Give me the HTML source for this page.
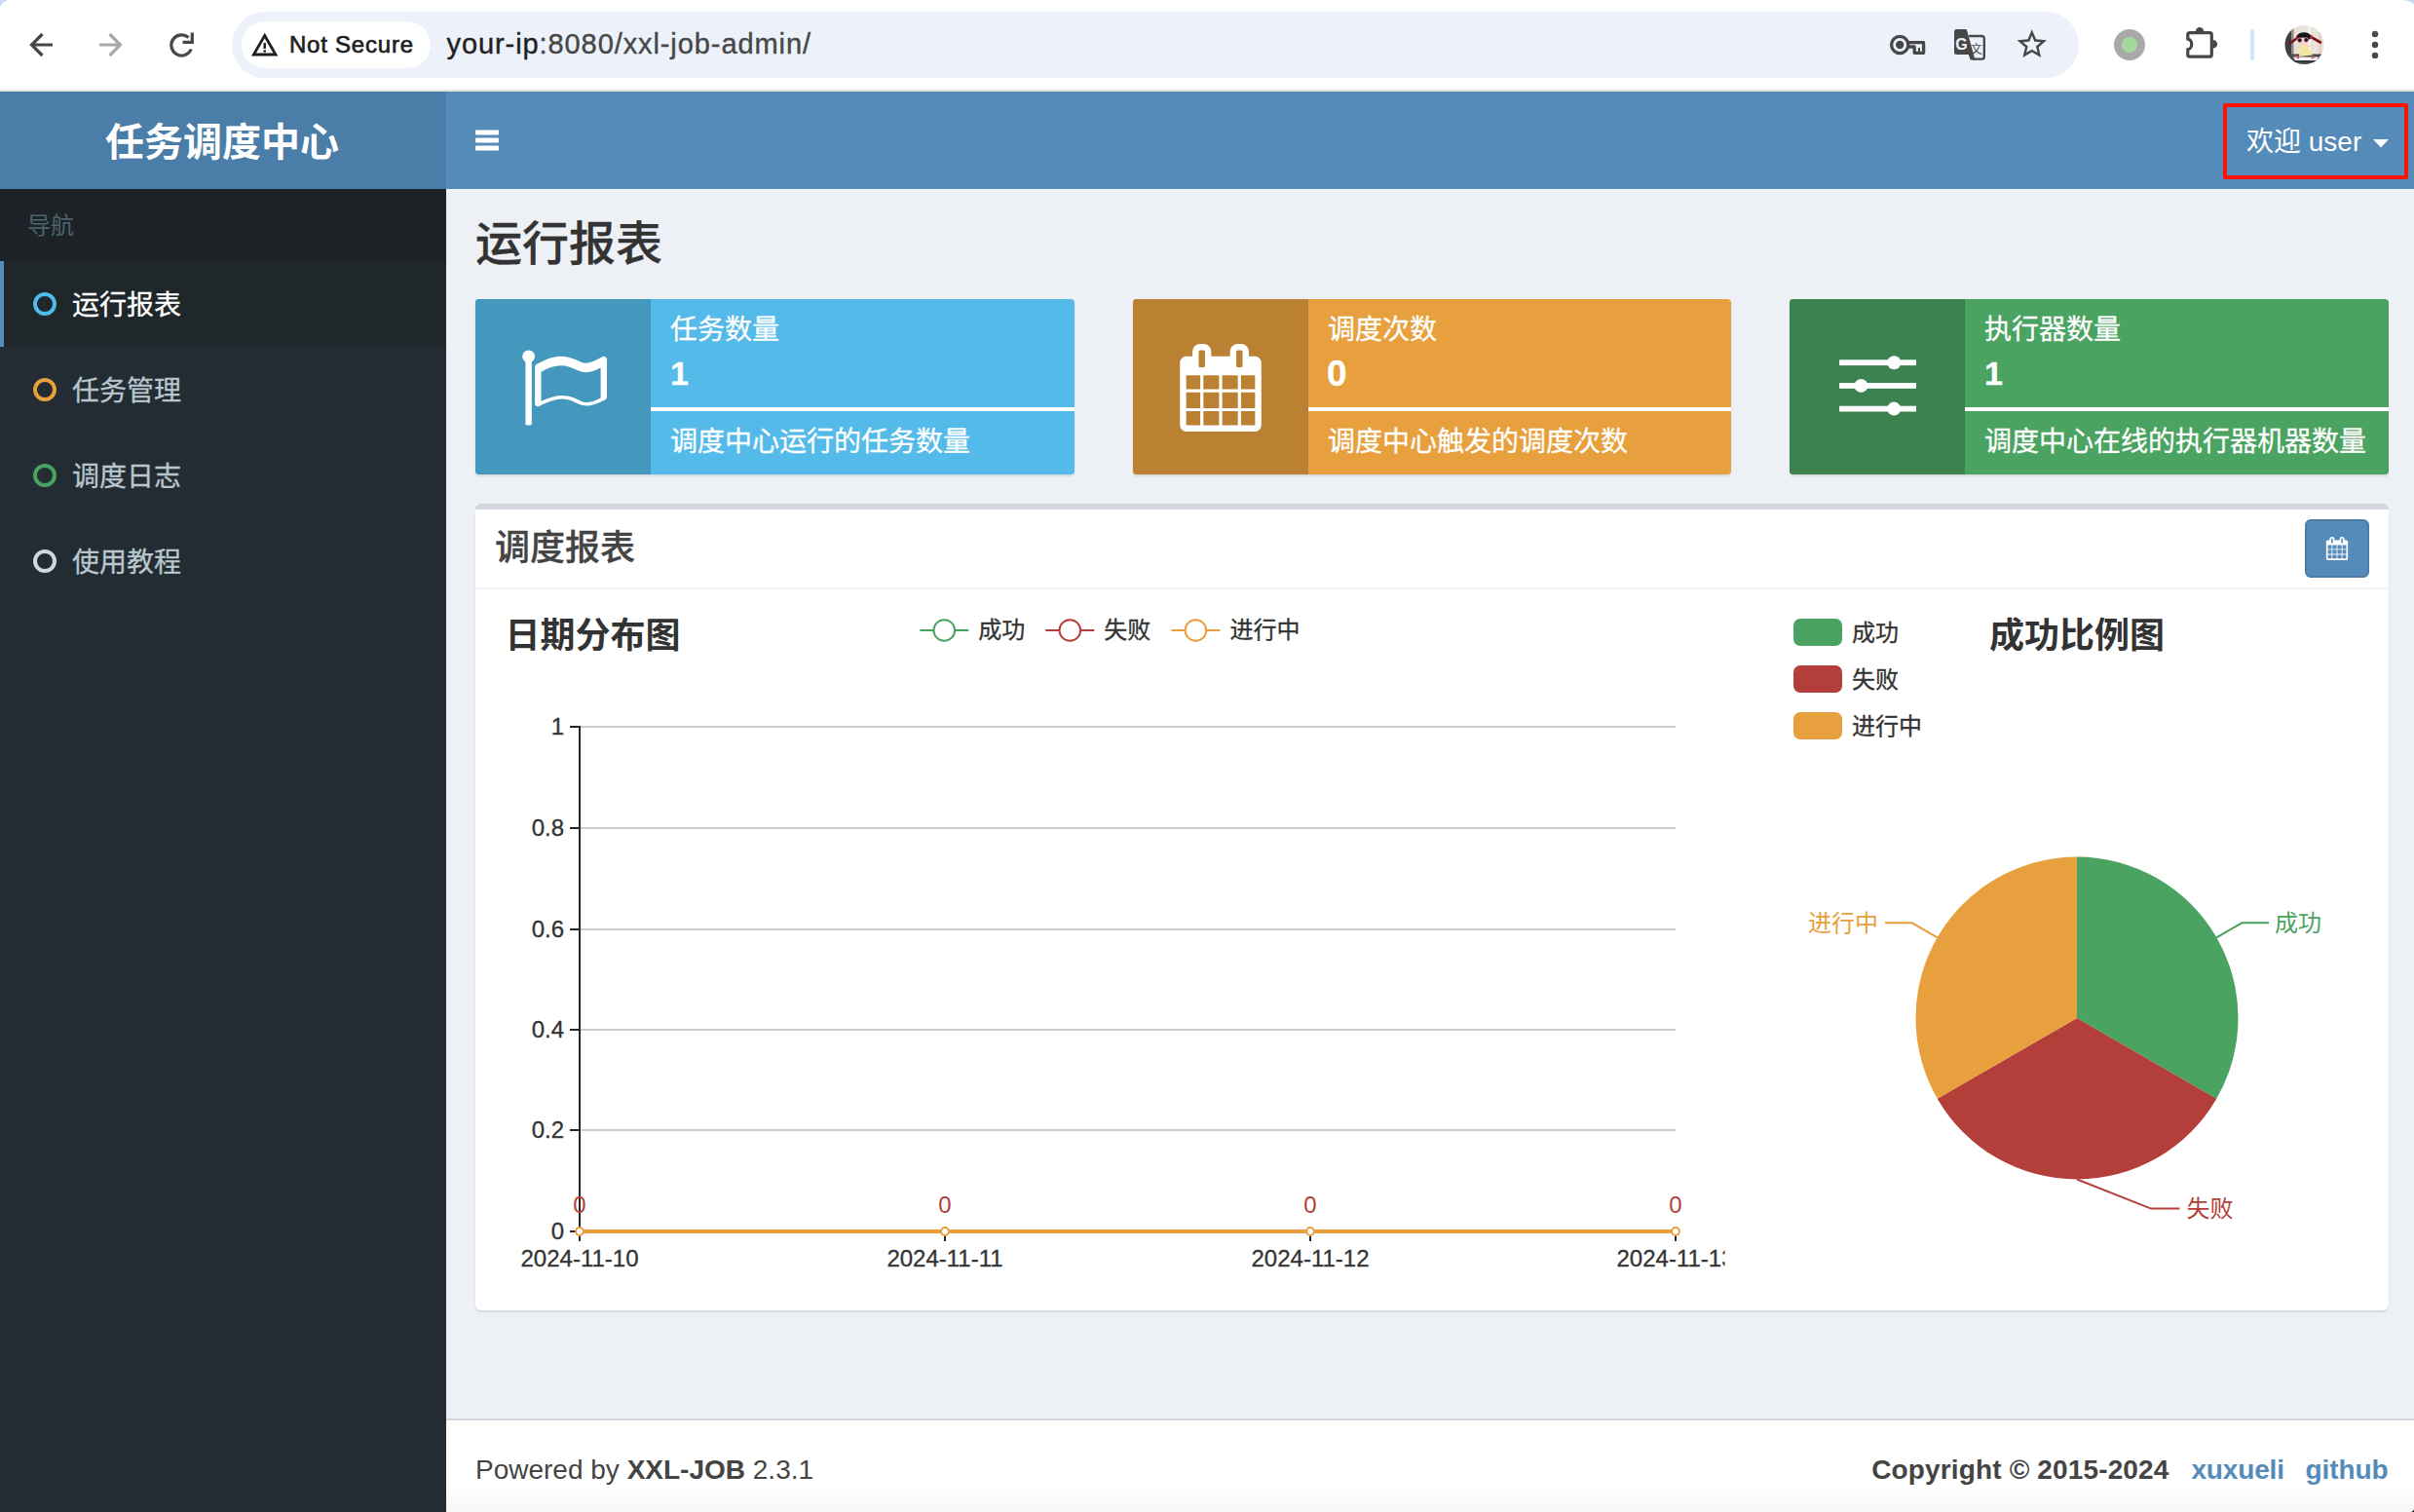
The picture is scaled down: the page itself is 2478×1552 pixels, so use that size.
<!DOCTYPE html>
<html lang="zh-CN">
<head>
<meta charset="utf-8">
<title>任务调度中心</title>
<style>
*{box-sizing:border-box;margin:0;padding:0}
html,body{width:2478px;height:1552px;overflow:hidden;background:#edf1f6}
body{position:relative;font-family:"Liberation Sans","Noto Sans CJK SC",sans-serif;color:#333}
.abs{position:absolute}
.t{position:absolute;white-space:nowrap;line-height:1}
svg{position:absolute;overflow:visible}
/* browser chrome */
#chrome{left:0;top:0;width:2478px;height:92px;background:#fff}
#chromeline{left:0;top:92px;width:2478px;height:2px;background:#e4e4e1}
#urlbar{left:238px;top:12px;width:1896px;height:68px;border-radius:34px;background:#edf2fa}
#chip{left:248px;top:22px;width:194px;height:48px;border-radius:24px;background:#fff}
/* app header */
#logo{left:0;top:94px;width:458px;height:100px;background:#4a7da7}
#navbar{left:458px;top:94px;width:2020px;height:100px;background:#548bb9}
/* sidebar */
#sidebar{left:0;top:194px;width:458px;height:1358px;background:#242c33}
#navhead{left:0;top:194px;width:458px;height:74px;background:#1d2226}
#active{left:0;top:268px;width:458px;height:88px;background:#1f272b;border-left:4px solid #548bb9}
.ring{position:absolute;width:24px;height:24px;border-radius:50%;border:4px solid #fff}
.mi{font-size:28px;color:#b8c7ce;-webkit-text-stroke:0.300px currentColor}
/* info boxes */
.ib{position:absolute;top:307px;height:180px;width:615px;border-radius:4px;box-shadow:0 2px 2px rgba(0,0,0,.1);overflow:hidden}
.ib .ic{position:absolute;left:0;top:0;width:180px;height:180px}
.ib .bar{position:absolute;left:180px;right:0;top:111px;height:4px;background:#fff}
.ib .t{color:#fff;-webkit-text-stroke:0.300px #fff}
/* box */
#box{left:488px;top:517px;width:1964px;height:828px;background:#fff;border-top:6px solid #d2d6de;border-radius:6px;box-shadow:0 2px 2px rgba(0,0,0,.1)}
#boxline{left:488px;top:603px;width:1964px;height:2px;background:#f4f4f4}
#btn{left:2366px;top:533px;width:66px;height:60px;border-radius:6px;background:#548bb9;border:2px solid #4a7da7}
/* footer */
#footer{left:458px;top:1456px;width:2020px;height:96px;background:#fff;border-top:2px solid #d2d6de}
#charts text{stroke-width:0.300px}
#charts text[fill="#333"]{stroke:#333}
#charts #lt,#charts #pt{stroke:none}
</style>
</head>
<body>
<!-- ===== browser chrome ===== -->
<div class="abs" id="chrome"></div>
<div class="abs" id="chromeline"></div>
<div class="abs" id="urlbar"></div>
<div class="abs" id="chip"></div>

<svg id="tb" style="left:0;top:0" width="2478" height="92" viewBox="0 0 2478 92" font-family="'Liberation Sans','Noto Sans CJK SC',sans-serif">
<!-- corners -->
<path d="M0 0H9.500Q2.500 1 0 7z" fill="#cdd8f8"/>
<path d="M2478 0H2466Q2474.500 .500 2478 4.800z" fill="#cdd8f8"/>
<!-- back -->
<path d="M54 46H33M43.5 35L32.5 46l11 11" fill="none" stroke="#474747" stroke-width="3.2" stroke-linejoin="miter"/>
<!-- forward -->
<path d="M102 46h21M112.5 35l11 11-11 11" fill="none" stroke="#a9a9a9" stroke-width="3.2"/>
<!-- reload -->
<path d="M196.2 50.5A10.6 10.6 0 1 1 193.5 38.5" fill="none" stroke="#474747" stroke-width="3.2"/>
<path d="M197.300 33.500v9.800h-9.800" fill="none" stroke="#474747" stroke-width="3.2"/>
<!-- warning -->
<path d="M271.7 36.5L283 56H260.4z" fill="none" stroke="#1f1f1f" stroke-width="2.8" stroke-linejoin="miter"/>
<rect x="270.5" y="44" width="2.4" height="6" fill="#1f1f1f"/><rect x="270.5" y="51.3" width="2.4" height="2.4" fill="#1f1f1f"/>
<!-- key -->
<circle cx="1950.2" cy="46" r="8.6" fill="none" stroke="#474747" stroke-width="3.3"/>
<circle cx="1950.2" cy="46" r="4.2" fill="#474747"/>
<path d="M1959 43.7h15.6v10.6h-9.4v-6.3h-6.2" fill="none" stroke="#474747" stroke-width="3.3" stroke-linejoin="round"/>
<rect x="1969" y="49" width="2" height="5" fill="#474747"/>
<!-- translate -->
<path d="M2008.500 30h8.800a2 2 0 0 1 1.900 1.400L2027.500 61.500h-4.800l-2-5.500H2008.500a2.500 2.500 0 0 1-2.500-2.500v-21a2.500 2.500 0 0 1 2.500-2.500z" fill="#474747"/>
<path d="M2021.200 37h13.300a2.300 2.300 0 0 1 2.300 2.300v19a2.300 2.300 0 0 1-2.300 2.300h-9.500" fill="none" stroke="#474747" stroke-width="2.400"/>
<text x="2007.200" y="50.800" font-size="16" font-weight="700" fill="#edf2fa">G</text>
<text x="2022.800" y="54.500" font-size="12" fill="#474747">文</text>
<!-- star -->
<g transform="translate(2067.600 27.300) scale(1.5150)"><path fill="#474747" d="M22 9.240l-7.190-.620L12 2 9.190 8.630 2 9.240l5.460 4.730L5.820 21 12 17.270 18.180 21l-1.630-7.030L22 9.240zM12 15.400l-3.760 2.270 1-4.280-3.320-2.880 4.380-.380L12 6.100l1.710 4.040 4.380.380-3.320 2.880 1 4.280L12 15.400z"/></g>
<!-- ext circle -->
<circle cx="2186" cy="46" r="16" fill="#a9a9a9"/><circle cx="2186" cy="46" r="8.200" fill="#a4d99e"/>
<!-- puzzle -->
<path d="M2247.800 33.600H2268.300a2 2 0 0 1 2 2V56.200a2 2 0 0 1-2 2H2247.800a2 2 0 0 1-2-2V50.600A3.900 5.200 0 0 0 2245.800 40.200V35.600a2 2 0 0 1 2-2z" fill="none" stroke="#474747" stroke-width="3.200" stroke-linejoin="round"/>
<path d="M2253.800 32.500a4.200 4.600 0 0 1 8.400 0z" fill="#474747"/><path d="M2271.500 40.900a4.600 4.300 0 0 1 0 8.600z" fill="#474747"/>
<!-- divider -->
<rect x="2310" y="30" width="4" height="32" rx="2" fill="#d3e3fd"/>
<!-- avatar -->
<defs><clipPath id="av"><circle cx="2365.500" cy="46" r="20"/></clipPath></defs>
<g clip-path="url(#av)">
<rect x="2345" y="25" width="42" height="42" fill="#e9e3dc"/>
<rect x="2345" y="25" width="7.500" height="34" fill="#3d3f41"/>
<rect x="2352.500" y="25" width="2" height="34" fill="#8d8a86"/>
<rect x="2369.500" y="25" width="2.500" height="30" fill="#f7f3ee"/>
<rect x="2380.500" y="30" width="2" height="26" fill="#e6c9c4"/>
<rect x="2345" y="55.500" width="42" height="11" fill="#4b4f51"/>
<path d="M2354 58.500h26l-2 3.500h-22z" fill="#f2f2f2"/>
<rect x="2350" y="62.500" width="30" height="1.500" fill="#2e3133"/>
<path d="M2359 38.500L2350.500 44.500" stroke="#7a1216" stroke-width="2.600" stroke-linecap="round"/>
<path d="M2371.500 37.500L2382 43.500" stroke="#7a1216" stroke-width="2.600" stroke-linecap="round"/>
<circle cx="2358.300" cy="38" r="1.700" fill="#e63946"/><circle cx="2372.300" cy="37.300" r="1.700" fill="#e63946"/>
<ellipse cx="2365" cy="37.800" rx="7.200" ry="4.600" fill="#17141a"/>
<ellipse cx="2363.800" cy="42.600" rx="5.600" ry="4.200" fill="#f6d6cb"/>
<circle cx="2360.700" cy="41.300" r="2.300" fill="#1b1115" stroke="#f3a7c3" stroke-width=".800"/>
<circle cx="2367.300" cy="41" r="2.300" fill="#1b1115" stroke="#f3a7c3" stroke-width=".800"/>
<path d="M2361.500 46.500l6.500-.500 6 10.500-14 1.500z" fill="#f4e89f"/>
<path d="M2361.500 48l-5 2M2368.500 47.500l6-1.500" stroke="#f3d2c5" stroke-width="1.600" stroke-linecap="round"/>
<path d="M2356 57.500l4 2.500M2376 58l-3 2" stroke="#e8557a" stroke-width="1.600"/>
</g>
<!-- dots -->
<circle cx="2438" cy="35" r="3.200" fill="#474747"/><circle cx="2438" cy="46" r="3.200" fill="#474747"/><circle cx="2438" cy="56.900" r="3.200" fill="#474747"/>
<!-- texts -->
<text id="ns" x="297" y="54.300" font-size="24" font-weight="400" fill="#1f1f1f" stroke="#1f1f1f" stroke-width="0.700" textLength="127" lengthAdjust="spacing">Not Secure</text>
<text id="url" x="458.500" y="55.200" font-size="29" fill="#474747" stroke="#474747" stroke-width="0.400" textLength="373.500" lengthAdjust="spacing"><tspan fill="#1f1f1f" stroke="#1f1f1f">your-ip</tspan>:8080/xxl-job-admin/</text>
</svg>


<!-- ===== app header ===== -->
<div class="abs" id="logo"></div>
<div class="abs" id="navbar"></div>

<div class="t" id="logotxt" style="left:-1px;width:458px;top:125.500px;text-align:center;font-size:40px;font-weight:700;color:#fff">任务调度中心</div>
<svg id="bars" style="left:488px;top:133px" width="24" height="22" viewBox="0 0 24 22"><rect x="0" y="0.5" width="24" height="5" rx="1" fill="#fff"/><rect x="0" y="8.5" width="24" height="5" rx="1" fill="#fff"/><rect x="0" y="16.5" width="24" height="5" rx="1" fill="#fff"/></svg>
<div class="t" id="welcome" style="left:2306px;top:131.500px;font-size:28px;color:#fff">欢迎 user</div>
<svg id="caret" style="left:2436px;top:143px" width="16" height="9" viewBox="0 0 16 9"><path d="M0 0h16l-8 8.5z" fill="#fff"/></svg>
<div class="abs" id="redbox" style="left:2282px;top:106px;width:190px;height:78px;border:4px solid #fd1100;border-radius:2px"></div>


<!-- ===== sidebar ===== -->
<div class="abs" id="sidebar"></div>
<div class="abs" id="navhead"></div>
<div class="abs" id="active"></div>

<div class="t" id="navlbl" style="left:28px;top:220.300px;font-size:24px;color:#4b646f">导航</div>
<div class="ring" style="left:34px;top:300px;border-color:#52bbea"></div>
<div class="t mi" id="m1" style="left:74px;top:300px;color:#fff">运行报表</div>
<div class="ring" style="left:34px;top:388px;border-color:#e7a03d"></div>
<div class="t mi" id="m2" style="left:74px;top:388px">任务管理</div>
<div class="ring" style="left:34px;top:476px;border-color:#4aa361"></div>
<div class="t mi" id="m3" style="left:74px;top:476px">调度日志</div>
<div class="ring" style="left:34px;top:564px;border-color:#d2d6de"></div>
<div class="t mi" id="m4" style="left:74px;top:564px">使用教程</div>


<!-- ===== content ===== -->

<div class="t" id="h1" style="left:488px;top:227px;font-size:48px;color:#333;font-weight:500;-webkit-text-stroke:0.300px #333">运行报表</div>

<div class="ib" id="ib1" style="left:488px;background:#54baea">
  <div class="ic" style="background:#4497bd"></div>
  <svg style="left:45px;top:45.600px" width="90" height="90" viewBox="0 0 1792 1792"><path fill="#fff" d="M1664 1105v-616q-169 91 -306 91q-82 0 -145 -32q-100 -49 -184 -76.5t-178 -27.5q-173 0 -403 127v599q245 -113 433 -113q55 0 103.5 7.5t98 26t77 31t82.5 39.5l28 14q44 22 101 22q120 0 293 -92zM320 256q0 35 -17.5 64t-46.5 46v1266q0 14 -9 23t-23 9h-64q-14 0 -23 -9t-9 -23v-1266q-29 -17 -46.5 -46t-17.5 -64q0 -53 37.5 -90.5t90.5 -37.5t90.5 37.5t37.5 90.5zM1792 320v763q0 39 -35 57q-10 5 -17 9q-218 116 -369 116q-88 0 -158 -35l-28 -14q-64 -33 -99 -48t-91 -29t-114 -14q-102 0 -235.5 44t-228.5 102q-15 9 -33 9q-16 0 -32 -8q-32 -19 -32 -56v-742q0 -35 31 -55q35 -21 78.5 -42.5t114 -52t152.5 -49.5t155 -19q112 0 209 31t209 86q38 19 89 19q122 0 310 -112q22 -12 31 -17q31 -16 62 2q31 20 31 55z"/></svg>
  <div class="bar"></div>
  <div class="t" style="left:200px;top:18px;font-size:28px">任务数量</div>
  <div class="t" style="left:200px;top:59px;font-size:34px;font-weight:700">1</div>
  <div class="t" style="left:200px;top:132.500px;font-size:28px">调度中心运行的任务数量</div>
</div>
<div class="ib" id="ib2" style="left:1163px;width:614px;background:#e7a03d">
  <div class="ic" style="background:#b98131"></div>
  <svg style="left:44.500px;top:46px" width="90" height="90" viewBox="0 0 1792 1792"><path fill="#fff" d="M192 1664h288v-288h-288v288zM544 1664h320v-288h-320v288zM192 1312h288v-320h-288v320zM544 1312h320v-320h-320v320zM192 928h288v-288h-288v288zM928 1664h320v-288h-320v288zM544 928h320v-288h-320v288zM1312 1664h288v-288h-288v288zM928 1312h320v-320h-320v320zM576 448v-288q0 -13 -9.5 -22.5t-22.5 -9.5h-64q-13 0 -22.5 9.5t-9.5 22.5v288q0 13 9.5 22.5t22.5 9.5h64q13 0 22.5 -9.5t9.5 -22.5zM1312 1312h288v-320h-288v320zM928 928h320v-288h-320v288zM1312 928h288v-288h-288v288zM1344 448v-288q0 -13 -9.5 -22.5t-22.5 -9.5h-64q-13 0 -22.5 9.5t-9.5 22.5v288q0 13 9.5 22.5t22.5 9.5h64q13 0 22.5 -9.5t9.5 -22.5zM1728 384v1280q0 52 -38 90t-90 38h-1408q-52 0 -90 -38t-38 -90v-1280q0 -52 38 -90t90 -38h128v-96q0 -66 47 -113t113 -47h64q66 0 113 47t47 113v96h384v-96q0 -66 47 -113t113 -47h64q66 0 113 47t47 113v96h128q52 0 90 38t38 90z"/></svg>
  <div class="bar"></div>
  <div class="t" style="left:200px;top:18px;font-size:28px">调度次数</div>
  <div class="t" style="left:199px;top:57.500px;font-size:37px;font-weight:700">0</div>
  <div class="t" style="left:200px;top:132.500px;font-size:28px">调度中心触发的调度次数</div>
</div>
<div class="ib" id="ib3" style="left:1837px;background:#4aa361">
  <div class="ic" style="background:#3c824e"></div>
  <svg style="left:0;top:0" width="180" height="180" viewBox="0 0 180 180"><g fill="#fff"><rect x="51.1" y="62.3" width="78.9" height="5.8"/><rect x="51.1" y="86" width="78.9" height="5.8"/><rect x="51.1" y="109.7" width="78.9" height="5.8"/><circle cx="107.3" cy="65.2" r="7"/><circle cx="73.4" cy="88.9" r="7"/><circle cx="107.2" cy="112.6" r="7"/></g></svg>
  <div class="bar"></div>
  <div class="t" style="left:200px;top:18px;font-size:28px">执行器数量</div>
  <div class="t" style="left:200px;top:59px;font-size:34px;font-weight:700">1</div>
  <div class="t" style="left:200px;top:132.500px;font-size:28px">调度中心在线的执行器机器数量</div>
</div>

<div class="abs" id="box"></div>
<div class="abs" id="boxline"></div>
<div class="t" id="boxtitle" style="left:508px;top:544.500px;font-size:36px;color:#444;font-weight:500;-webkit-text-stroke:0.300px #444">调度报表</div>
<div class="abs" id="btn"></div>
<svg id="btncal" style="left:2387px;top:551.300px" width="24" height="24" viewBox="0 0 1792 1792"><path fill="#fff" d="M192 1664h288v-288h-288v288zM544 1664h320v-288h-320v288zM192 1312h288v-320h-288v320zM544 1312h320v-320h-320v320zM192 928h288v-288h-288v288zM928 1664h320v-288h-320v288zM544 928h320v-288h-320v288zM1312 1664h288v-288h-288v288zM928 1312h320v-320h-320v320zM576 448v-288q0 -13 -9.5 -22.5t-22.5 -9.5h-64q-13 0 -22.5 9.5t-9.5 22.5v288q0 13 9.5 22.5t22.5 9.5h64q13 0 22.5 -9.5t9.5 -22.5zM1312 1312h288v-320h-288v320zM928 928h320v-288h-320v288zM1312 928h288v-288h-288v288zM1344 448v-288q0 -13 -9.5 -22.5t-22.5 -9.5h-64q-13 0 -22.5 9.5t-9.5 22.5v288q0 13 9.5 22.5t22.5 9.5h64q13 0 22.5 -9.5t9.5 -22.5zM1728 384v1280q0 52 -38 90t-90 38h-1408q-52 0 -90 -38t-38 -90v-1280q0 -52 38 -90t90 -38h128v-96q0 -66 47 -113t113 -47h64q66 0 113 47t47 113v96h384v-96q0 -66 47 -113t113 -47h64q66 0 113 47t47 113v96h128q52 0 90 38t38 90z"/></svg>
<svg id="charts" style="left:0;top:0;" width="2478" height="1552" viewBox="0 0 2478 1552" font-family="'Liberation Sans','Noto Sans CJK SC',sans-serif">
<defs><clipPath id="lc"><rect x="508" y="625" width="1262.5" height="700"/></clipPath></defs>
<g clip-path="url(#lc)">
<text id="lt" x="518.500" y="664.800" font-size="36" font-weight="700" fill="#333">日期分布图</text>
<line x1="595" x2="1720" y1="746" y2="746" stroke="#ccc" stroke-width="2"/>
<line x1="595" x2="1720" y1="850" y2="850" stroke="#ccc" stroke-width="2"/>
<line x1="595" x2="1720" y1="954" y2="954" stroke="#ccc" stroke-width="2"/>
<line x1="595" x2="1720" y1="1057" y2="1057" stroke="#ccc" stroke-width="2"/>
<line x1="595" x2="1720" y1="1160" y2="1160" stroke="#ccc" stroke-width="2"/>
<line x1="595" x2="595" y1="745" y2="1265" stroke="#262626" stroke-width="2"/>
<line stroke="#262626" x1="585" x2="595" y1="746" y2="746" stroke-width="2"/>
<text x="579" y="753.5" font-size="24" fill="#333" text-anchor="end">1</text>
<line stroke="#262626" x1="585" x2="595" y1="850" y2="850" stroke-width="2"/>
<text x="579" y="857.5" font-size="24" fill="#333" text-anchor="end">0.8</text>
<line stroke="#262626" x1="585" x2="595" y1="954" y2="954" stroke-width="2"/>
<text x="579" y="961.5" font-size="24" fill="#333" text-anchor="end">0.6</text>
<line stroke="#262626" x1="585" x2="595" y1="1057" y2="1057" stroke-width="2"/>
<text x="579" y="1064.5" font-size="24" fill="#333" text-anchor="end">0.4</text>
<line stroke="#262626" x1="585" x2="595" y1="1160" y2="1160" stroke-width="2"/>
<text x="579" y="1167.5" font-size="24" fill="#333" text-anchor="end">0.2</text>
<line stroke="#262626" x1="585" x2="595" y1="1264" y2="1264" stroke-width="2"/>
<text x="579" y="1271.5" font-size="24" fill="#333" text-anchor="end">0</text>
<line x1="595" x2="595" y1="1264" y2="1274" stroke="#262626" stroke-width="2"/>
<text x="595" y="1299.500" font-size="24" fill="#333" text-anchor="middle">2024-11-10</text>
<line x1="970" x2="970" y1="1264" y2="1274" stroke="#262626" stroke-width="2"/>
<text x="970" y="1299.500" font-size="24" fill="#333" text-anchor="middle">2024-11-11</text>
<line x1="1345" x2="1345" y1="1264" y2="1274" stroke="#262626" stroke-width="2"/>
<text x="1345" y="1299.500" font-size="24" fill="#333" text-anchor="middle">2024-11-12</text>
<line x1="1720" x2="1720" y1="1264" y2="1274" stroke="#262626" stroke-width="2"/>
<text x="1720" y="1299.500" font-size="24" fill="#333" text-anchor="middle">2024-11-13</text>
<line x1="595" x2="1720" y1="1264" y2="1264" stroke="#e7a03d" stroke-width="4"/>
<circle cx="595" cy="1264" r="3.900" fill="#fff" stroke="#e7a03d" stroke-width="2"/>
<text x="595" y="1244.500" font-size="24" fill="#b43f3a" text-anchor="middle">0</text>
<circle cx="970" cy="1264" r="3.900" fill="#fff" stroke="#e7a03d" stroke-width="2"/>
<text x="970" y="1244.500" font-size="24" fill="#b43f3a" text-anchor="middle">0</text>
<circle cx="1345" cy="1264" r="3.900" fill="#fff" stroke="#e7a03d" stroke-width="2"/>
<text x="1345" y="1244.500" font-size="24" fill="#b43f3a" text-anchor="middle">0</text>
<circle cx="1720" cy="1264" r="3.900" fill="#fff" stroke="#e7a03d" stroke-width="2"/>
<text x="1720" y="1244.500" font-size="24" fill="#b43f3a" text-anchor="middle">0</text>
<line x1="944.3" x2="994.3" y1="647" y2="647" stroke="#4aa361" stroke-width="2"/><circle cx="969.3" cy="647" r="10.800" fill="#fff" stroke="#4aa361" stroke-width="2"/><text x="1004.3" y="655" font-size="24" fill="#333">成功</text>
<line x1="1073.3" x2="1123.3" y1="647" y2="647" stroke="#b43f3a" stroke-width="2"/><circle cx="1098.3" cy="647" r="10.800" fill="#fff" stroke="#b43f3a" stroke-width="2"/><text x="1133.3" y="655" font-size="24" fill="#333">失败</text>
<line x1="1202.4" x2="1252.4" y1="647" y2="647" stroke="#e7a03d" stroke-width="2"/><circle cx="1227.4" cy="647" r="10.800" fill="#fff" stroke="#e7a03d" stroke-width="2"/><text x="1262.4" y="655" font-size="24" fill="#333">进行中</text>
</g>
<path d="M2132 1045L2132.00 879.50A165.5 165.5 0 0 1 2275.33 1127.75Z" fill="#4aa361"/>
<path d="M2132 1045L2275.33 1127.75A165.5 165.5 0 0 1 1988.67 1127.75Z" fill="#b43f3a"/>
<path d="M2132 1045L1988.67 1127.75A165.5 165.5 0 0 1 2132.00 879.50Z" fill="#e7a03d"/>
<polyline points="2275.3,962.3 2301.3,947.3 2329,947.3" fill="none" stroke="#4aa361" stroke-width="2"/>
<text x="2335" y="955.5" font-size="24" fill="#4aa361">成功</text>
<polyline points="1988.7,962.3 1962.7,947.3 1935,947.3" fill="none" stroke="#e7a03d" stroke-width="2"/>
<text x="1928" y="955.5" font-size="24" fill="#e7a03d" text-anchor="end">进行中</text>
<polyline points="2132,1210.5 2208,1240.6 2237.5,1240.6" fill="none" stroke="#b43f3a" stroke-width="2"/>
<text x="2244.5" y="1248.5" font-size="24" fill="#b43f3a">失败</text>
<rect x="1841" y="635" width="50" height="28" rx="7" fill="#4aa361"/>
<text x="1901" y="657.5" font-size="24" fill="#333">成功</text>
<rect x="1841" y="683" width="50" height="28" rx="7" fill="#b43f3a"/>
<text x="1901" y="705.5" font-size="24" fill="#333">失败</text>
<rect x="1841" y="731" width="50" height="28" rx="7" fill="#e7a03d"/>
<text x="1901" y="753.5" font-size="24" fill="#333">进行中</text>
<text id="pt" x="2132" y="664.800" font-size="36" font-weight="700" fill="#333" text-anchor="middle">成功比例图</text>
</svg>


<!-- ===== footer ===== -->
<div class="abs" id="footer"></div>
<div class="abs" id="fgrad" style="left:458px;top:1528px;width:2020px;height:24px;background:linear-gradient(to bottom,rgba(0,0,0,0),rgba(0,0,0,.035))"></div>
<svg style="left:2474px;top:1548px" width="4" height="4" viewBox="0 0 4 4"><path d="M4 4V1.500L1.500 4z" fill="#222"/></svg>

<div class="t" id="f1" style="left:488px;top:1495.200px;font-size:28px;color:#444">Powered by <b>XXL-JOB</b> 2.3.1</div>
<div class="t" id="f2" style="right:251.500px;top:1495.200px;font-size:28px;color:#444;font-weight:700;letter-spacing:.140px">Copyright © 2015-2024</div>
<div class="t" id="f3" style="right:133.200px;top:1495.200px;font-size:28px;color:#548bb9;font-weight:700;letter-spacing:-.150px">xuxueli</div>
<div class="t" id="f4" style="right:26.500px;top:1495.200px;font-size:28px;color:#548bb9;font-weight:700;letter-spacing:-.100px">github</div>

</body>
</html>
